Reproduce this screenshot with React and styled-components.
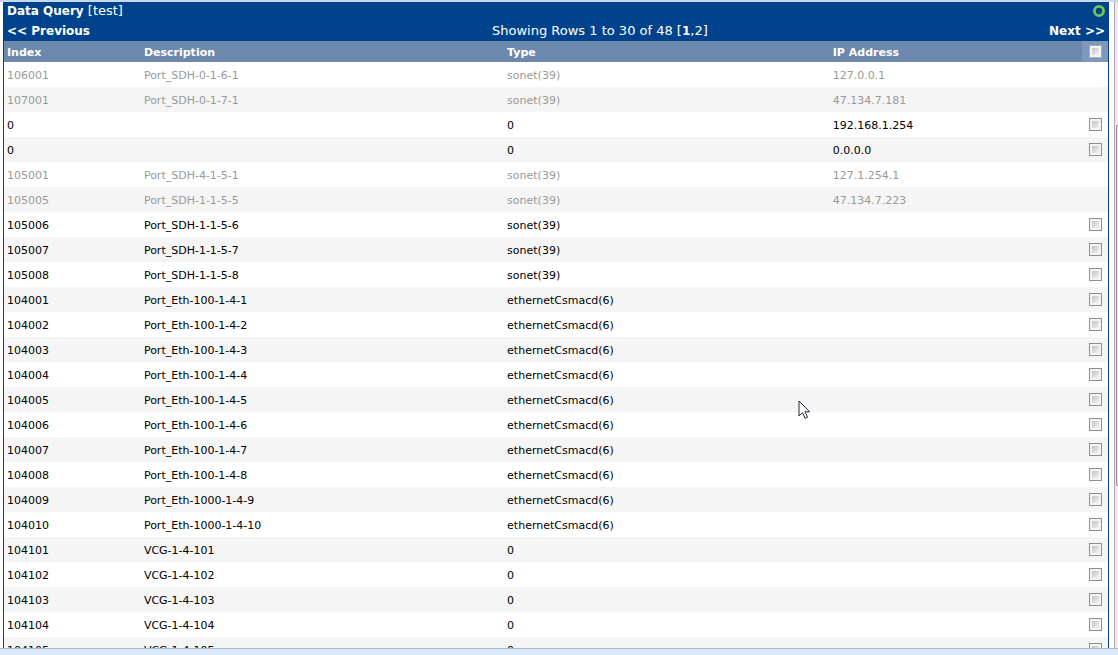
import React, { useState } from 'react';
import styled, { createGlobalStyle } from 'styled-components';

const navy = '#00438c';
const headerBlue = '#6d88ad';
const stripe = '#f5f5f5';

const GlobalStyle = createGlobalStyle`
	* {
		box-sizing: border-box;
	}
	body {
		margin: 0;
		background-color: white;
		font-family: Verdana, 'DejaVu Sans', sans-serif;
		font-size: 11px;
		color: black;
	}
`;

const Page = styled.div`
	height: 100vh;
	display: flex;
	flex-direction: column;
	border-top: 2px solid #c6d9ee;
	overflow: hidden;
`;

const Main = styled.main`
	flex: 1;
	min-height: 0;
	display: flex;
	gap: 5px;
	padding-left: 3px;
`;

const Panel = styled.section`
	flex: 1;
	min-width: 0;
	border: solid ${navy};
	border-width: 0 1px;
	overflow: hidden;
`;

const Bar = styled.div`
	padding: 0 3px;
	background-color: ${navy};
	color: white;
	font-size: 13px;
	line-height: 18px;

	strong {
		font-size: 12px;
	}
`;

const TitleBar = styled(Bar)`
	display: flex;
	align-items: center;
	justify-content: space-between;
`;

const NavBar = styled(Bar)`
	display: grid;
	grid-template-columns: 15% 1fr 7%;
	padding-top: 2px;
	padding-bottom: 1px;
	white-space: nowrap;
`;

const NavItem = styled.div`
	text-align: ${({ $align }) => $align || 'left'};
`;

const Title = styled.h1`
	margin: 0;
	font-size: 13px;
	font-weight: normal;
`;

const PageLink = styled.a`
	color: white;
	text-decoration: none;
`;

const ReloadBtn = styled.button`
	display: flex;
	padding: 0;
	border: none;
	background: none;
	cursor: pointer;
`;

const Table = styled.table`
	width: 100%;
	table-layout: fixed;
	border-collapse: collapse;
`;

const Col = styled.col`
	width: ${({ $width }) => $width};
`;

const HeadCell = styled.th`
	height: 21px;
	padding: 2px 3px 0;
	background-color: ${headerBlue};
	color: white;
	text-align: left;
`;

const HeadCheckCell = styled(HeadCell)`
	padding: 0 6px 0 7px;
	background-color: #8097bc;
`;

const Row = styled.tr`
	height: 25px;
	color: ${({ $disabled }) => ($disabled ? '#999999' : 'black')};

	&:nth-child(even) {
		background-color: ${stripe};
	}
`;

const Cell = styled.td`
	padding: 2px 3px 0;
	white-space: nowrap;
`;

const CheckCell = styled.td`
	padding: 0 6px 0 7px;
`;

const Checkbox = styled.input`
	appearance: none;
	display: block;
	width: 13px;
	height: 13px;
	margin: 0;
	padding: 2px;
	border: 1px solid ${({ $light }) => ($light ? '#a9adb5' : '#8e8f8f')};
	background: linear-gradient(135deg, #c0c2c6, #f4f4f4) content-box, #f4f4f4;

	&:checked {
		background: linear-gradient(${navy}, ${navy}) content-box, #f4f4f4;
	}
`;

const ScrollTrack = styled.div`
	width: 4px;
	display: flex;
	flex-direction: column;
	padding-top: 123px;
	border-left: 1px solid #b0aab0;
	background-color: #f1e8ea;
`;

const ScrollThumb = styled.div`
	height: 69%;
	margin-left: 1px;
	border: 1px solid #96888f;
	border-right: none;
	border-radius: 2px 0 0 2px;
	background-color: #eeeaec;
`;

const StatusBar = styled.footer`
	height: 7px;
	border-top: 1px solid #a9bdd3;
	background-color: #dae8f7;
`;

const Pointer = styled.svg`
	position: absolute;
	left: 798px;
	top: 400px;
	pointer-events: none;
`;

const sonet = 'sonet(39)';
const ethernet = 'ethernetCsmacd(6)';

const rows = [
	['106001', 'Port_SDH-0-1-6-1', sonet, '127.0.0.1', true],
	['107001', 'Port_SDH-0-1-7-1', sonet, '47.134.7.181', true],
	['0', '', '0', '192.168.1.254'],
	['0', '', '0', '0.0.0.0'],
	['105001', 'Port_SDH-4-1-5-1', sonet, '127.1.254.1', true],
	['105005', 'Port_SDH-1-1-5-5', sonet, '47.134.7.223', true],
	['105006', 'Port_SDH-1-1-5-6', sonet],
	['105007', 'Port_SDH-1-1-5-7', sonet],
	['105008', 'Port_SDH-1-1-5-8', sonet],
	['104001', 'Port_Eth-100-1-4-1', ethernet],
	['104002', 'Port_Eth-100-1-4-2', ethernet],
	['104003', 'Port_Eth-100-1-4-3', ethernet],
	['104004', 'Port_Eth-100-1-4-4', ethernet],
	['104005', 'Port_Eth-100-1-4-5', ethernet],
	['104006', 'Port_Eth-100-1-4-6', ethernet],
	['104007', 'Port_Eth-100-1-4-7', ethernet],
	['104008', 'Port_Eth-100-1-4-8', ethernet],
	['104009', 'Port_Eth-1000-1-4-9', ethernet],
	['104010', 'Port_Eth-1000-1-4-10', ethernet],
	['104101', 'VCG-1-4-101', '0'],
	['104102', 'VCG-1-4-102', '0'],
	['104103', 'VCG-1-4-103', '0'],
	['104104', 'VCG-1-4-104', '0'],
	['104105', 'VCG-1-4-105', '0'],
].map(([index, description, type, ip, disabled]) => ({
	index,
	description,
	type,
	ip,
	disabled: Boolean(disabled),
}));

const selectable = rows.map((row, i) => i).filter(i => !rows[i].disabled);

function QueryTable() {
	const [selected, setSelected] = useState([]);
	const allSelected = selected.length === selectable.length;

	const toggle = i => {
		setSelected(
			selected.includes(i) ? selected.filter(s => s !== i) : [...selected, i]
		);
	};

	return (
		<Table>
			<colgroup>
				<Col $width="12.4%" />
				<Col $width="32.9%" />
				<Col $width="29.5%" />
				<Col />
				<Col $width="26px" />
			</colgroup>
			<thead>
				<tr>
					<HeadCell>Index</HeadCell>
					<HeadCell>Description</HeadCell>
					<HeadCell>Type</HeadCell>
					<HeadCell>IP Address</HeadCell>
					<HeadCheckCell>
						<Checkbox
							type="checkbox"
							$light
							aria-label="Select all"
							checked={allSelected}
							onChange={() => setSelected(allSelected ? [] : selectable)}
						/>
					</HeadCheckCell>
				</tr>
			</thead>
			<tbody>
				{rows.map((row, i) => (
					<Row key={i} $disabled={row.disabled}>
						<Cell>{row.index}</Cell>
						<Cell>{row.description}</Cell>
						<Cell>{row.type}</Cell>
						<Cell>{row.ip}</Cell>
						<CheckCell>
							{!row.disabled && (
								<Checkbox
									type="checkbox"
									aria-label={`Select ${row.description || row.ip}`}
									checked={selected.includes(i)}
									onChange={() => toggle(i)}
								/>
							)}
						</CheckCell>
					</Row>
				))}
			</tbody>
		</Table>
	);
}

export default function App() {
	return (
		<>
			<GlobalStyle />
			<Page>
				<Main>
					<Panel>
						<TitleBar>
							<Title>
								<strong>Data Query</strong> [test]
							</Title>
							<ReloadBtn aria-label="Reload query">
								<svg width="12" height="12" viewBox="0 0 12 12">
									<circle cx="6" cy="6" r="4.6" fill="none" stroke="#72c653" strokeWidth="2.8" />
								</svg>
							</ReloadBtn>
						</TitleBar>
						<NavBar>
							<NavItem>
								<PageLink href="#previous">
									<strong>&lt;&lt; Previous</strong>
								</PageLink>
							</NavItem>
							<NavItem $align="center">
								Showing Rows 1 to 30 of 48 [
								<PageLink href="#1">
									<strong>1</strong>
								</PageLink>
								,<PageLink href="#2">2</PageLink>]
							</NavItem>
							<NavItem $align="right">
								<PageLink href="#next">
									<strong>Next &gt;&gt;</strong>
								</PageLink>
							</NavItem>
						</NavBar>
						<QueryTable />
					</Panel>
					<ScrollTrack>
						<ScrollThumb />
					</ScrollTrack>
				</Main>
				<StatusBar />
			</Page>
			<Pointer width="13" height="20" viewBox="0 0 13 20">
				<path
					d="M1 1v15l3.5-3.3 2.6 5.6 2.4-1.1-2.5-5.4h4.6z"
					fill="white"
					stroke="#25253a"
					strokeWidth="1"
				/>
			</Pointer>
		</>
	);
}
